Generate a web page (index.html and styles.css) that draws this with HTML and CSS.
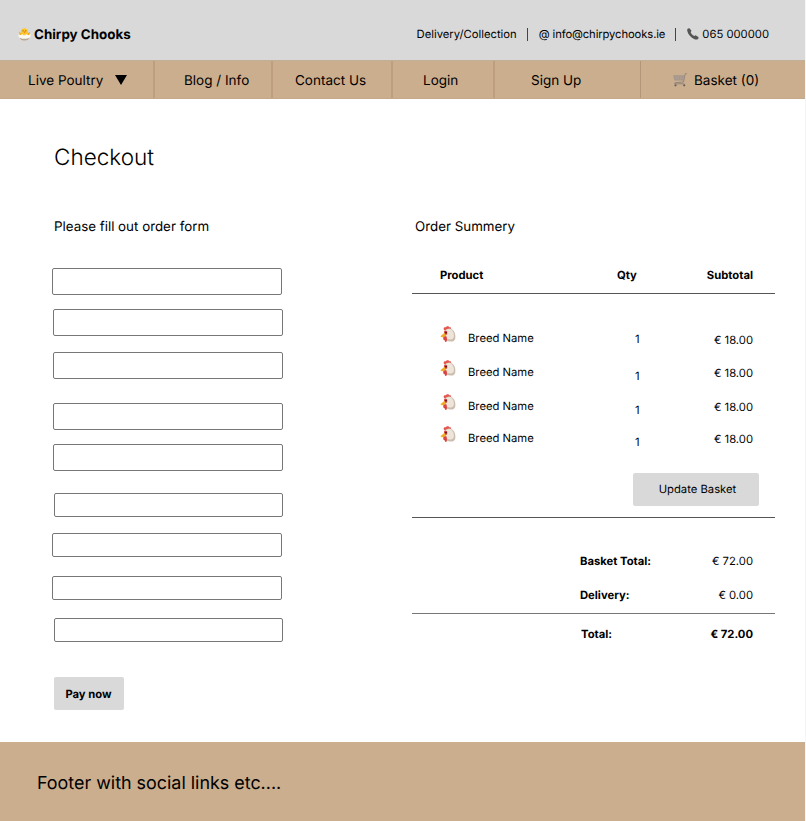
FILE: index.html
```html
<!DOCTYPE html>
<html lang="en">
<head>
<meta charset="utf-8">
<title>Chirpy Chooks – Checkout</title>
<link rel="stylesheet" href="styles.css">
</head>
<body>
<svg class="defs" width="0" height="0" aria-hidden="true">
  <symbol id="hen" viewBox="0 0 16 17">
    <path d="M4.500 4.600C2.800 2.600 3.800.6 5.800 1.300 6.600-.3 9-.1 9.400 1.300c1.600-.3 2.200.9 1.400 2L7 5z" fill="#e4564f"/>
    <path d="M4.500 5C6 2 10.700 1.600 12.900 4c2.200 2.200 2.700 5 2.400 8.200-.3 2.500-2.300 3.400-4.500 3.400-3.600 0-5.600-1.400-6.300-4z" fill="#cdbdae"/>
    <path d="M5.500 5c2-2.600 5.300-2.400 7-.1 1.600 2.200 1.900 5.200.9 7.300-2 2-6.100 1.700-7.900-.9z" fill="#ede5da"/>
    <path d="M4 5.500c1.500-1.400 3.300-.8 3.300 1.300C7.300 8.700 6 9.800 4.300 9z" fill="#d93a3b"/>
    <path d="M4.200 7 .4 10.200c1.200 1.400 3.800 1.400 5-.2.600-1.200.1-2.400-1.200-3z" fill="#f0ad22"/>
    <path d="M3.300 11.200c1.200-.5 2.300-.8 2.800-1.200 1.100 1.500 1.200 5.500 0 6-1.100.4-1.300-1-1.500-2-.8.600-1.700-.8-1.300-2.800z" fill="#d94442"/>
    <circle cx="6" cy="6.600" r=".9" fill="#382421"/>
  </symbol>
</svg>
<div class="page">
  <header class="top">
    <div class="brand">
      <svg class="chick" viewBox="0 0 13 13">
        <path d="M.8 3.800 3.200 5.200h6.500l2.500-1.400-.9 3.700H1.700z" fill="#f3ae1c"/>
        <path d="M2.800 7V3.400C2.800 1.500 4.300.2 6.400.2S10 1.500 10 3.400V7z" fill="#fcc62c"/>
        <circle cx="5" cy="2.800" r=".5" fill="#614018"/><circle cx="7.800" cy="2.800" r=".5" fill="#614018"/>
        <path d="M5.300 3.600h2.200l-1.100 1.300z" fill="#e76b19"/>
        <path d="M.5 6 2.300 7.200 4.200 6.300 6.200 7.500 8.300 6.300 10.400 7.200 12.500 6C13 10 10.400 12.800 6.500 12.800S0 10 .5 6z" fill="#fbf8f1"/>
        <path d="M1.200 9.500c2 1.700 8.300 1.800 10.600 0-.8 2.200-2.800 3.300-5.300 3.300s-4.500-1.100-5.300-3.300z" fill="#b5a995"/>
      </svg>
      <span class="brand-name">Chirpy Chooks</span>
    </div>
    <div class="contact">
      <span class="delivery">Delivery/Collection</span>
      <i class="bar"></i>
      <span class="mail">@ info@chirpychooks.ie</span>
      <i class="bar"></i>
      <svg class="phone" viewBox="0 0 12 12"><path d="M1 .6 2.400.2 4.500 2.800 3.700 4.300c.7 1.600 1.900 2.900 3.500 3.800l1.500-.8 2.900 2-.3 1.400c-1 1.100-2.600 1.100-4.300.3C3.600 9.300 1 6.300.3 3 .1 2 .2 1.100 1 .6z" fill="#555"/></svg>
      <span class="tel">065 000000</span>
    </div>
  </header>
  <nav class="nav">
    <a class="n1"><span>Live Poultry</span><svg class="tri" viewBox="0 0 12 10"><path d="M0 0h12L6 10z"/></svg></a>
    <a class="n2"><span>Blog / Info</span></a>
    <a class="n3"><span>Contact Us</span></a>
    <a class="n4"><span>Login</span></a>
    <a class="n5"><span>Sign Up</span></a>
    <a class="n6">
      <svg class="cart" viewBox="0 0 14 14"><path d="M.2 2.200h10.700L10.300 7.600H1.500z" fill="#a0938a"/><path d="M.4 4h10M.8 5.800h9.600M3 2.200l.6 5.400M5.500 2.200v5.400M8 2.200v5.400" stroke="#b9a596" stroke-width=".5"/><path d="M13.800.7h-1.600L10.500 9l-8.700.8v1h9.400" fill="none" stroke="#8f8178" stroke-width=".9"/><circle cx="2.500" cy="12.300" r="1.100" fill="#655f5e"/><circle cx="11.200" cy="12.300" r="1.100" fill="#655f5e"/></svg>
      <span>Basket (0)</span>
    </a>
  </nav>
  <main class="main">
    <h1>Checkout</h1>
    <div class="columns">
      <form class="order-form">
        <h2>Please fill out order form</h2>
        <input class="field f1"><input class="field f2"><input class="field f3">
        <input class="field f4"><input class="field f5"><input class="field short f6">
        <input class="field short f7"><input class="field short f8"><input class="field short f9">
        <button class="pay" type="button">Pay now</button>
      </form>
      <section class="summary">
        <h2>Order Summery</h2>
        <div class="row head"><span>Product</span><span class="qty">Qty</span><span class="price">Subtotal</span></div>
        <div class="items">
          <div class="row item first"><span class="breed"><svg class="hen"><use href="#hen"/></svg>Breed Name</span><span class="qty">1</span><span class="price">€ 18.00</span></div>
          <div class="row item"><span class="breed"><svg class="hen"><use href="#hen"/></svg>Breed Name</span><span class="qty">1</span><span class="price">€ 18.00</span></div>
          <div class="row item third"><span class="breed"><svg class="hen"><use href="#hen"/></svg>Breed Name</span><span class="qty">1</span><span class="price">€ 18.00</span></div>
          <div class="row item"><span class="breed"><svg class="hen"><use href="#hen"/></svg>Breed Name</span><span class="qty">1</span><span class="price">€ 18.00</span></div>
          <button class="update" type="button">Update Basket</button>
        </div>
        <div class="totals">
          <div class="total"><b>Basket Total:</b><span>€ 72.00</span></div>
          <div class="total"><b>Delivery:</b><span>€ 0.00</span></div>
        </div>
        <div class="total grand"><b>Total:</b><b class="sum">€ 72.00</b></div>
      </section>
    </div>
  </main>
  <footer class="footer">Footer with social links etc....</footer>
</div>
</body>
</html>
```
FILE: styles.css
```css
* { box-sizing: border-box; }
body { margin: 0; background: #f5f5f5; color: #000; font-family: Inter, "Liberation Sans", sans-serif; font-size: 11.25px; line-height: 16px; overflow: hidden; text-rendering: geometricPrecision; }
.defs { position: absolute; }
.page { width: 805px; height: 821px; background: #fff; display: flex; flex-direction: column; }
svg { flex: none; }
span, b { white-space: nowrap; }

.top { height: 60px; background: #d9d9d9; display: flex; justify-content: space-between; padding: 8px 36px 0 18px; align-items: center; }
.brand { display: flex; align-items: center; gap: 3px; }
.chick { width: 13px; height: 13px; }
.brand-name { font-size: 13.4px; font-weight: 700; padding-top: 2px; }
.contact { display: flex; align-items: center; }
.bar { width: 1px; height: 13px; background: #444; margin: 0 11px 0 10px; }
.mail { letter-spacing: -0.11px; }
.phone { width: 12px; height: 12px; margin-right: 3px; }

.nav { height: 39px; background: #cbae8e; border-top: 1px solid #c3ae97; border-bottom: 1px solid #c3a88a; display: grid; grid-template-columns: 155px 118px 120px 102px 146px 164px; font-size: 13.5px; }
.nav a { display: flex; align-items: center; border-right: 2px solid #bd9f80; }
.nav span { padding-top: 2px; }
.nav .n1 { padding-left: 28px; gap: 12px; }
.nav .n2 { padding-left: 29px; }
.nav .n3 { padding-left: 22px; }
.nav .n4 { padding-left: 30px; }
.nav .n5 { padding-left: 36px; border-right: 1px solid #b39678; }
.nav .n6 { padding-left: 32px; gap: 7px; border-right: 0; }
.tri { width: 12px; height: 10px; }
.cart { width: 14px; height: 14px; }

.main { height: 643px; }
h1 { margin: 0; padding: 44px 0 0 54px; font-size: 22.5px; line-height: 30px; font-weight: 300; }
.columns { display: grid; grid-template-columns: 412px 363px; padding-top: 46px; }
h2 { margin: 0; font-size: 13.35px; line-height: 16px; font-weight: 400; }

.order-form { display: flex; flex-direction: column; align-items: flex-start; }
.order-form h2 { margin-left: 54px; }
.field { width: 230px; height: 27px; border: 1px solid #777; border-radius: 2px; background: #fff; padding: 0 6px; margin: 0 0 0 53px; }
.field.short { height: 24px; }
.field.f1 { margin: 33px 0 0 52px; }
.field.f2 { margin-top: 14px; }
.field.f3 { margin-top: 16px; }
.field.f4 { margin-top: 24px; }
.field.f5 { margin-top: 14px; }
.field.f6 { width: 229px; margin: 22px 0 0 54px; }
.field.f7 { margin: 16px 0 0 52px; }
.field.f8 { margin: 19px 0 0 52px; }
.field.f9 { width: 229px; margin: 18px 0 0 54px; }
button { border: 0; border-radius: 2px; background: #d9d9d9; font: inherit; color: #000; padding: 0; text-rendering: inherit; }
.pay { width: 70px; height: 33px; margin: 35px 0 0 54px; padding-right: 1px; font-weight: 700; }

.summary h2 { padding-left: 3px; }
.row { display: grid; grid-template-columns: 1fr 24px 112px; padding: 0 22px 0 28px; }
.head { height: 59px; padding-top: 32px; font-weight: 700; border-bottom: 1px solid #555; }
.price { text-align: right; }
.items { height: 224px; padding-top: 36px; border-bottom: 1px solid #555; display: flex; flex-direction: column; }
.item { height: 34px; flex: none; }
.item.third { height: 32px; }
.item .qty { padding: 4px 0 0 18px; }
.item .price { padding-top: 1px; }
.item.first .qty { padding-top: 1px; }
.item.first .price { padding-top: 2px; }
.breed { display: flex; gap: 12px; }
.hen { width: 16px; height: 17px; margin-top: -4px; }
.update { width: 126px; height: 33px; align-self: flex-end; margin: 9px 16px 0 0; padding: 0 0 2px 3px; }
.totals { height: 96px; padding-top: 35px; border-bottom: 1px solid #777; display: grid; grid-auto-rows: 34px; }
.total { display: flex; justify-content: space-between; padding: 0 22px 0 168px; }
.grand { padding-top: 12px; padding-left: 169px; }

.footer { height: 79px; background: #cbae8e; padding: 27px 0 0 37px; font-size: 17.9px; line-height: 30px; }
```
